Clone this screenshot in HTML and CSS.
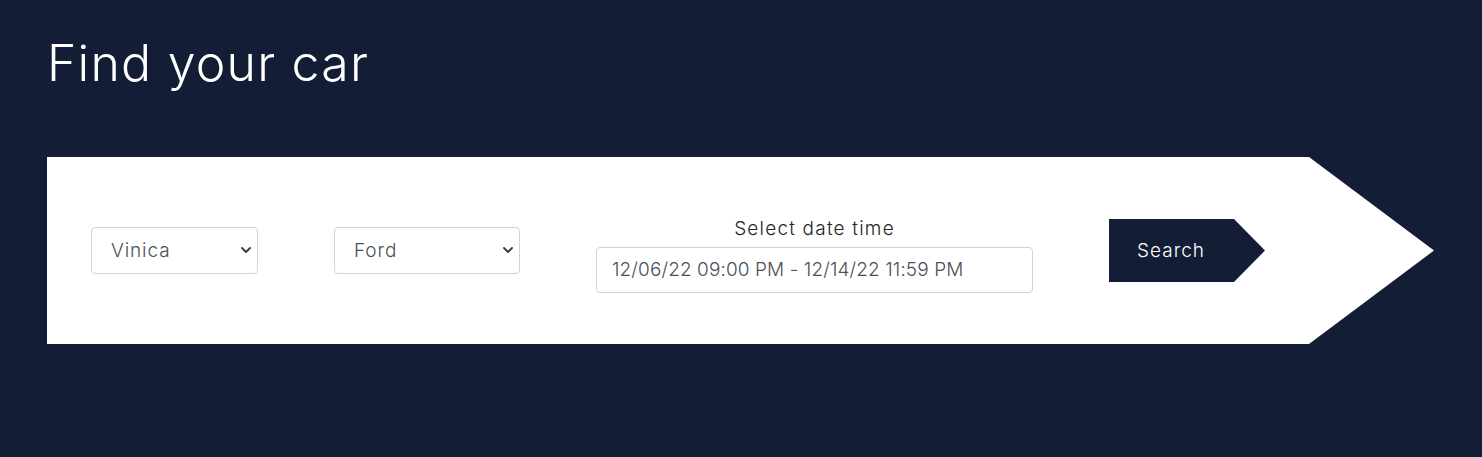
FILE: index.html
```html
<!DOCTYPE html>
<html lang="en">
<head>
<meta charset="utf-8">
<title>Find your car</title>
<link rel="stylesheet" href="styles.css">
</head>
<body>
<main class="page">
  <h1 class="title">Find your car</h1>
  <form class="finder">
    <div class="select-wrap select-city">
      <select class="select">
        <option>Vinica</option>
      </select>
      <svg class="chevron" viewBox="0 0 10 6" width="10" height="6"><path d="M1 1l4 4 4-4" fill="none" stroke="#343a40" stroke-width="1.8" stroke-linecap="round" stroke-linejoin="round"/></svg>
    </div>
    <div class="select-wrap select-brand">
      <select class="select">
        <option>Ford</option>
      </select>
      <svg class="chevron" viewBox="0 0 10 6" width="10" height="6"><path d="M1 1l4 4 4-4" fill="none" stroke="#343a40" stroke-width="1.8" stroke-linecap="round" stroke-linejoin="round"/></svg>
    </div>
    <div class="date-group">
      <label class="date-label" for="dt">Select date time</label>
      <input id="dt" class="date-input" type="text" value="12/06/22 09:00 PM - 12/14/22 11:59 PM">
    </div>
    <button type="button" class="search-btn">Search</button>
  </form>
</main>
</body>
</html>
```
FILE: styles.css
```css
* { box-sizing: border-box; }
html, body {
  margin: 0;
  background: #131d35;
  font-family: "Inter", "Open Sans", sans-serif;
}
.page {
  padding: 28px 48px 0 47px;
}
.title {
  margin: 0;
  color: #ffffff;
  font-weight: 300;
  font-size: 50px;
  line-height: 70px;
  letter-spacing: 1.2px;
}
.finder {
  margin-top: 59px;
  height: 187px;
  background: #ffffff;
  clip-path: polygon(0 0, calc(100% - 125px) 0, 100% 50%, calc(100% - 125px) 100%, 0 100%);
  display: flex;
  align-items: center;
  gap: 76px;
  padding-left: 44px;
}
.select-wrap {
  position: relative;
  height: 47px;
}
.select-city { width: 167px; }
.select-brand { width: 186px; }
.select {
  appearance: none;
  -webkit-appearance: none;
  width: 100%;
  height: 100%;
  border: 1px solid #ced4da;
  border-radius: 4px;
  background: #ffffff;
  color: #495057;
  font-family: inherit;
  font-weight: 300;
  font-size: 19px;
  letter-spacing: 0.9px;
  padding: 0 30px 0 19px;
}
.chevron {
  position: absolute;
  right: 7px;
  top: 20px;
}
.date-group {
  display: flex;
  flex-direction: column;
  align-items: center;
  gap: 7px;
  margin-top: 9px;
}
.date-label {
  color: #212529;
  font-size: 19px;
  font-weight: 300;
  line-height: 22px;
  letter-spacing: 1.2px;
}
.date-input {
  width: 437px;
  height: 46px;
  border: 1px solid #ced4da;
  border-radius: 4px;
  color: #495057;
  font-family: inherit;
  font-weight: 300;
  font-size: 19px;
  letter-spacing: 0.1px;
  padding: 0 15px;
}
.search-btn {
  width: 156px;
  height: 63px;
  border: 0;
  background: #131d35;
  color: #ffffff;
  font-family: inherit;
  font-size: 19px;
  font-weight: 300;
  letter-spacing: 1px;
  text-align: left;
  padding: 0 0 0 28px;
  clip-path: polygon(0 0, 125px 0, 100% 50%, 125px 100%, 0 100%);
}
```
